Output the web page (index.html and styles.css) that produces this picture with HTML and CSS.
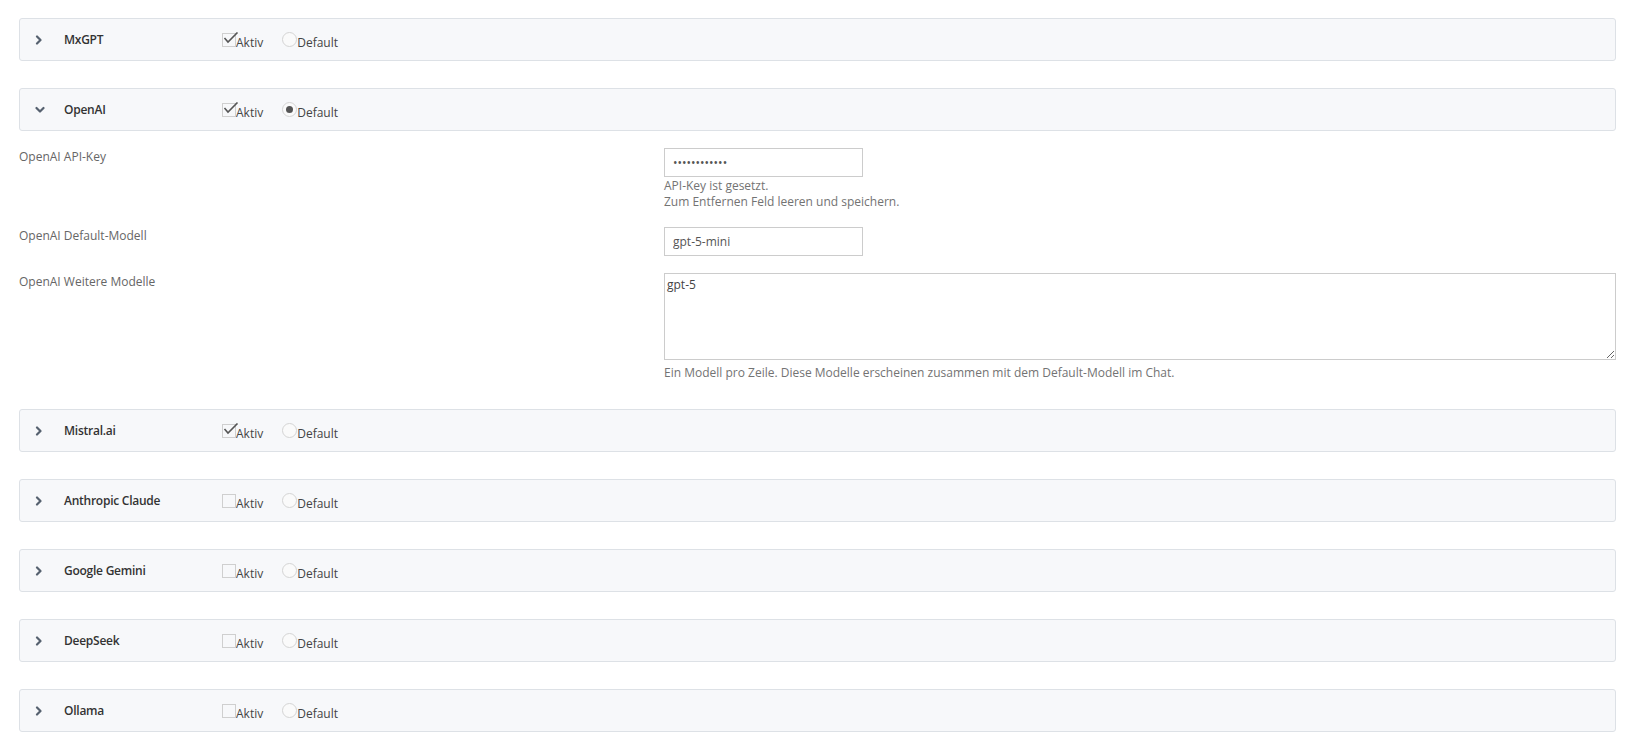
FILE: index.html
```html
<!DOCTYPE html>
<html>

<head>
  <title>KI-Anbieter</title>
  <link rel="stylesheet" href="styles.css">
</head>

<body>
  <div class="providers">

    <section class="provider">
      <div class="provider-head">
        <span class="toggle">
          <svg width="8" height="10" viewBox="0 0 8 10"><polyline points="2,1.5 5.5,5 2,8.5" /></svg>
        </span>
        <span class="provider-name">MxGPT</span>
        <label class="opt"><span class="box checked"><svg class="tick" width="16" height="12" viewBox="0 0 16 12"><polyline points="1.5,6 5,10 14.5,0.5" /></svg></span>Aktiv</label>
        <label class="opt"><span class="dot"></span>Default</label>
      </div>
    </section>

    <section class="provider">
      <div class="provider-head">
        <span class="toggle">
          <svg width="10" height="8" viewBox="0 0 10 8"><polyline points="1.5,2 5,5.5 8.5,2" /></svg>
        </span>
        <span class="provider-name">OpenAI</span>
        <label class="opt"><span class="box checked"><svg class="tick" width="16" height="12" viewBox="0 0 16 12"><polyline points="1.5,6 5,10 14.5,0.5" /></svg></span>Aktiv</label>
        <label class="opt"><span class="dot selected"></span>Default</label>
      </div>

      <div class="provider-body">
        <div class="field">
          <label class="field-label">OpenAI API-Key</label>
          <div class="field-control">
            <input class="text-input" type="password" value="abcdefghijkl">
            <p class="help help-key">API-Key ist gesetzt.<br>Zum Entfernen Feld leeren und speichern.</p>
          </div>
        </div>
        <div class="field">
          <label class="field-label">OpenAI Default-Modell</label>
          <div class="field-control">
            <input class="text-input" type="text" value="gpt-5-mini">
          </div>
        </div>
        <div class="field">
          <label class="field-label">OpenAI Weitere Modelle</label>
          <div class="field-control">
            <textarea class="text-area">gpt-5</textarea>
            <p class="help help-models">Ein Modell pro Zeile. Diese Modelle erscheinen zusammen mit dem Default-Modell im Chat.</p>
          </div>
        </div>
      </div>
    </section>

    <section class="provider">
      <div class="provider-head">
        <span class="toggle">
          <svg width="8" height="10" viewBox="0 0 8 10"><polyline points="2,1.5 5.5,5 2,8.5" /></svg>
        </span>
        <span class="provider-name">Mistral.ai</span>
        <label class="opt"><span class="box checked"><svg class="tick" width="16" height="12" viewBox="0 0 16 12"><polyline points="1.5,6 5,10 14.5,0.5" /></svg></span>Aktiv</label>
        <label class="opt"><span class="dot"></span>Default</label>
      </div>
    </section>

    <section class="provider">
      <div class="provider-head">
        <span class="toggle">
          <svg width="8" height="10" viewBox="0 0 8 10"><polyline points="2,1.5 5.5,5 2,8.5" /></svg>
        </span>
        <span class="provider-name">Anthropic Claude</span>
        <label class="opt"><span class="box"></span>Aktiv</label>
        <label class="opt"><span class="dot"></span>Default</label>
      </div>
    </section>

    <section class="provider">
      <div class="provider-head">
        <span class="toggle">
          <svg width="8" height="10" viewBox="0 0 8 10"><polyline points="2,1.5 5.5,5 2,8.5" /></svg>
        </span>
        <span class="provider-name">Google Gemini</span>
        <label class="opt"><span class="box"></span>Aktiv</label>
        <label class="opt"><span class="dot"></span>Default</label>
      </div>
    </section>

    <section class="provider">
      <div class="provider-head">
        <span class="toggle">
          <svg width="8" height="10" viewBox="0 0 8 10"><polyline points="2,1.5 5.5,5 2,8.5" /></svg>
        </span>
        <span class="provider-name">DeepSeek</span>
        <label class="opt"><span class="box"></span>Aktiv</label>
        <label class="opt"><span class="dot"></span>Default</label>
      </div>
    </section>

    <section class="provider">
      <div class="provider-head">
        <span class="toggle">
          <svg width="8" height="10" viewBox="0 0 8 10"><polyline points="2,1.5 5.5,5 2,8.5" /></svg>
        </span>
        <span class="provider-name">Ollama</span>
        <label class="opt"><span class="box"></span>Aktiv</label>
        <label class="opt"><span class="dot"></span>Default</label>
      </div>
    </section>

  </div>
</body>

</html>
```

FILE: styles.css
```css
body {
  margin: 0;
  padding: 0;
  background-color: #fff;
  font-family: "Open Sans", "Noto Sans", sans-serif;
  font-size: 12px;
  color: #333;
}

.providers {
  padding: 18px 13px 0 19px;
}

.provider {
  margin-bottom: 27px;
}

/* collapsed header bar of each provider */
.provider-head {
  display: grid;
  grid-template-columns: 30px 157px auto auto 1fr;
  align-items: center;
  height: 41px;
  padding-left: 15px;
  background-color: #f7f8fa;
  border: 1px solid #dde1e6;
  border-radius: 3px;
}

.toggle {
  display: flex;
  align-items: center;
}

.toggle svg polyline {
  fill: none;
  stroke: #56616f;
  stroke-width: 2.2;
  stroke-linecap: round;
  stroke-linejoin: round;
}

.provider-name {
  margin-left: -1px;
  font-size: 12px;
  font-weight: 600;
  letter-spacing: -0.25px;
  color: #333;
}

.opt {
  display: flex;
  align-items: baseline;
  padding-top: 4px;
  margin-right: 19px;
  line-height: 17px;
  color: #444;
}

.box {
  position: relative;
  display: inline-block;
  width: 12px;
  height: 12px;
  border: 1px solid #cfcfcf;
  background-color: #f7f8fa;
}

.tick {
  position: absolute;
  left: 0;
  top: -2px;
}

.tick polyline {
  fill: none;
  stroke: #555;
  stroke-width: 1.6;
}

.dot {
  position: relative;
  display: inline-block;
  width: 13px;
  height: 13px;
  border: 1px solid #d4d4d4;
  border-radius: 50%;
  background-color: #fafafa;
}

.dot.selected::after {
  content: "";
  position: absolute;
  left: 3px;
  top: 3px;
  width: 7px;
  height: 7px;
  border-radius: 50%;
  background-color: #555;
}

/* expanded settings */
.provider-body {
  padding: 17px 0 1px 0;
}

.field {
  display: grid;
  grid-template-columns: 645px 1fr;
  margin-bottom: 17px;
}

.field:last-child {
  margin-bottom: 0;
}

.field-label {
  line-height: 17px;
  color: #666;
}

.text-input {
  display: block;
  box-sizing: border-box;
  width: 199px;
  height: 29px;
  padding: 0 8px;
  border: 1px solid #ccc;
  border-radius: 0;
  font-family: inherit;
  font-size: 12px;
  color: #555;
  background-color: #fff;
  outline: none;
}

.text-area {
  display: block;
  box-sizing: border-box;
  width: 100%;
  height: 87px;
  padding: 2px;
  border: 1px solid #ccc;
  border-radius: 0;
  font-family: inherit;
  font-size: 12px;
  color: #444;
  outline: none;
}

.help {
  margin: 0;
  line-height: 16px;
  color: #737373;
}

.help-key {
  margin-top: 1px;
}

.help-models {
  margin-top: 5px;
}
```
